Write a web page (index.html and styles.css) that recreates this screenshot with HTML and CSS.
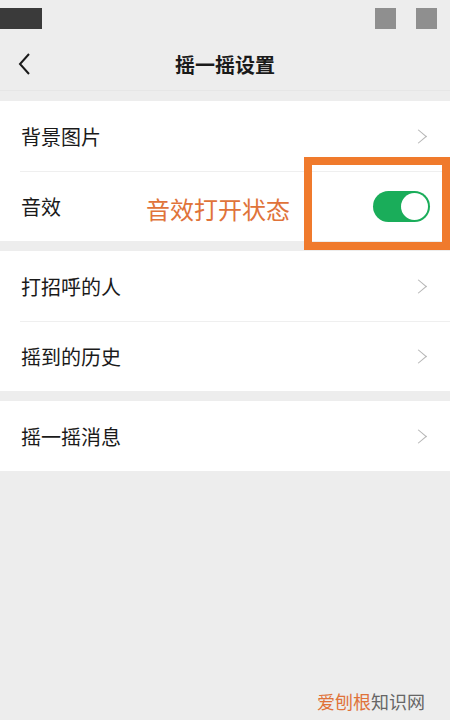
FILE: index.html
```html
<!DOCTYPE html>
<html lang="zh-CN">
<head>
	<meta charset="UTF-8">
	<title>摇一摇设置</title>
	<link rel="stylesheet" href="styles.css">
</head>
<body>
	<div class="status">
		<span class="blk dark"></span>
		<span class="icons"><span class="blk"></span><span class="blk"></span></span>
	</div>
	<div class="nav">
		<svg class="back" width="14" height="24" viewBox="0 0 14 24"><path d="M12 2 L3 12 L12 22" fill="none" stroke="#1a1a1a" stroke-width="2"/></svg>
		<div class="title">摇一摇设置</div>
	</div>

	<div class="group">
		<div class="row"><span>背景图片</span><i class="arr"></i></div>
		<div class="row">
			<span>音效</span>
			<span class="switch"><b></b></span>
		</div>
	</div>
	<div class="group">
		<div class="row"><span>打招呼的人</span><i class="arr"></i></div>
		<div class="row"><span>摇到的历史</span><i class="arr"></i></div>
	</div>
	<div class="group">
		<div class="row"><span>摇一摇消息</span><i class="arr"></i></div>
	</div>

	<!-- 标注 -->
	<div class="note">音效打开状态</div>
	<div class="mark"></div>
	<div class="wm"><em>爱刨根</em>知识网</div>
</body>
</html>
```

FILE: styles.css
```css
body{margin:0;background:#ededed;font-family:"Noto Sans CJK SC","Noto Sans",sans-serif;color:#1a1a1a;height:720px;position:relative;overflow:hidden;}
.status{height:38px;display:flex;justify-content:space-between;align-items:flex-start;padding-top:8px;box-sizing:border-box;}
.blk{display:inline-block;width:21px;height:21px;background:#8f8f8f;}
.blk.dark{width:42px;background:#3a3a3a;}
.icons{display:flex;gap:20px;padding-right:13px;}
.nav{height:52px;display:flex;align-items:center;position:relative;border-bottom:1px solid #e6e6e6;}
.back{margin-left:17px;}
.title{position:absolute;left:0;right:0;text-align:center;font-size:20px;font-weight:bold;top:12px;}

.group{background:#fff;margin-top:10px;}
.group + .group{margin-top:10px;}
.group:last-of-type{margin-top:12px;}
.row{height:70px;display:flex;align-items:center;justify-content:space-between;padding:0 22px 0 21px;font-size:20px;position:relative;}
.row + .row::before{content:"";position:absolute;left:20px;right:0;top:0;border-top:1px solid #efefef;}
.group:last-of-type .row{height:68px;}
.arr{width:10px;height:10px;border-top:1.5px solid #b5b5b5;border-right:1.5px solid #b5b5b5;transform:rotate(45deg) skew(-5deg,-5deg);margin-right:4px;}

.switch{width:57px;height:31px;border-radius:16px;background:#1aad5a;display:flex;justify-content:flex-end;align-items:center;padding:2px;box-sizing:border-box;margin-right:-2px;}
.switch b{width:27px;height:27px;border-radius:50%;background:#fff;}

.note{position:absolute;left:146px;top:191px;font-size:24px;color:#e0733a;}
.mark{position:absolute;left:304px;top:157px;width:146px;height:93px;border:8px solid #f07a2c;box-sizing:border-box;}
.wm{position:absolute;left:317px;top:688px;font-size:18px;color:#666;}
.wm em{font-style:normal;color:#e0733a;}
```
